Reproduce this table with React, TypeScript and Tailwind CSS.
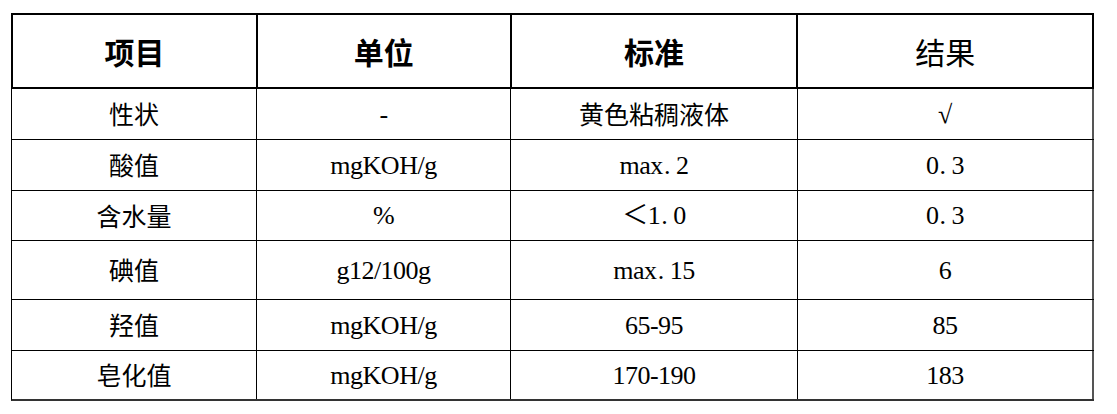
import React from "react";

const cjk = '"Noto Sans CJK SC", "Liberation Serif", serif';
const lat = '"Liberation Serif", "Noto Sans CJK SC", serif';

type Cell = { t: string; latin?: boolean };
const rows: { h: string; cells: Cell[] }[] = [
  { h: "h-[51px]", cells: [{ t: "性状" }, { t: "-", latin: true }, { t: "黄色粘稠液体" }, { t: "√", latin: true }] },
  { h: "h-[51px]", cells: [{ t: "酸值" }, { t: "mgKOH/g", latin: true }, { t: "max.2", latin: true }, { t: "0.3", latin: true }] },
  { h: "h-[50px]", cells: [{ t: "含水量" }, { t: "%", latin: true }, { t: "＜1.0", latin: true }, { t: "0.3", latin: true }] },
  { h: "h-[59px]", cells: [{ t: "碘值" }, { t: "g12/100g", latin: true }, { t: "max.15", latin: true }, { t: "6", latin: true }] },
  { h: "h-[51px]", cells: [{ t: "羟值" }, { t: "mgKOH/g", latin: true }, { t: "65-95", latin: true }, { t: "85", latin: true }] },
  { h: "h-[50px]", cells: [{ t: "皂化值" }, { t: "mgKOH/g", latin: true }, { t: "170-190", latin: true }, { t: "183", latin: true }] },
];

const widths = ["w-[245px]", "w-[254px]", "w-[287px]", "w-[296px]"];
const headers = [
  { t: "项目", b: true },
  { t: "单位", b: true },
  { t: "标准", b: true },
  { t: "结果", b: false },
];

function Text({ t }: { t: string }) {
  const parts = t.split(".");
  return (
    <>
      {parts.map((p, i) => (
        <React.Fragment key={i}>
          {i > 0 && <span className="pl-[1px] pr-[6px]">.</span>}
          {p}
        </React.Fragment>
      ))}
    </>
  );
}

export default function App() {
  return (
    <div className="w-[1117px] h-[414px] bg-white pt-[13px] pl-[11px]">
      <div className="flex flex-col w-[1083px]">
        <div className="flex h-[76px] border-t-2 border-b-2 border-l-2 border-black">
          {headers.map((h, i) => (
            <div
              key={i}
              className={`${widths[i]} ${i === 0 ? "w-[243px]" : ""} flex items-center justify-center border-r-2 border-black text-[30px] text-black ${h.b ? "font-bold" : "font-normal"}`}
              style={{ fontFamily: cjk }}
            >
              {h.t}
            </div>
          ))}
        </div>
        {rows.map((r, ri) => (
          <div key={ri} className={`flex ${r.h} border-b border-l border-black ${ri === rows.length - 1 ? "border-b-2 border-b-[#333]" : ""}`}>
            {r.cells.map((c, ci) => (
              <div
                key={ci}
                className={`${widths[ci]} ${ci === 0 ? "w-[244px]" : ""} flex items-center justify-center text-black ${ci === 3 ? "border-r-2 border-[#555]" : "border-r border-black"} ${c.latin ? "text-[26px] tracking-[-0.5px]" : "text-[25px]"}`}
                style={{ fontFamily: c.latin ? lat : cjk }}
              >
                {c.latin ? <Text t={c.t} /> : c.t}
              </div>
            ))}
          </div>
        ))}
      </div>
    </div>
  );
}
